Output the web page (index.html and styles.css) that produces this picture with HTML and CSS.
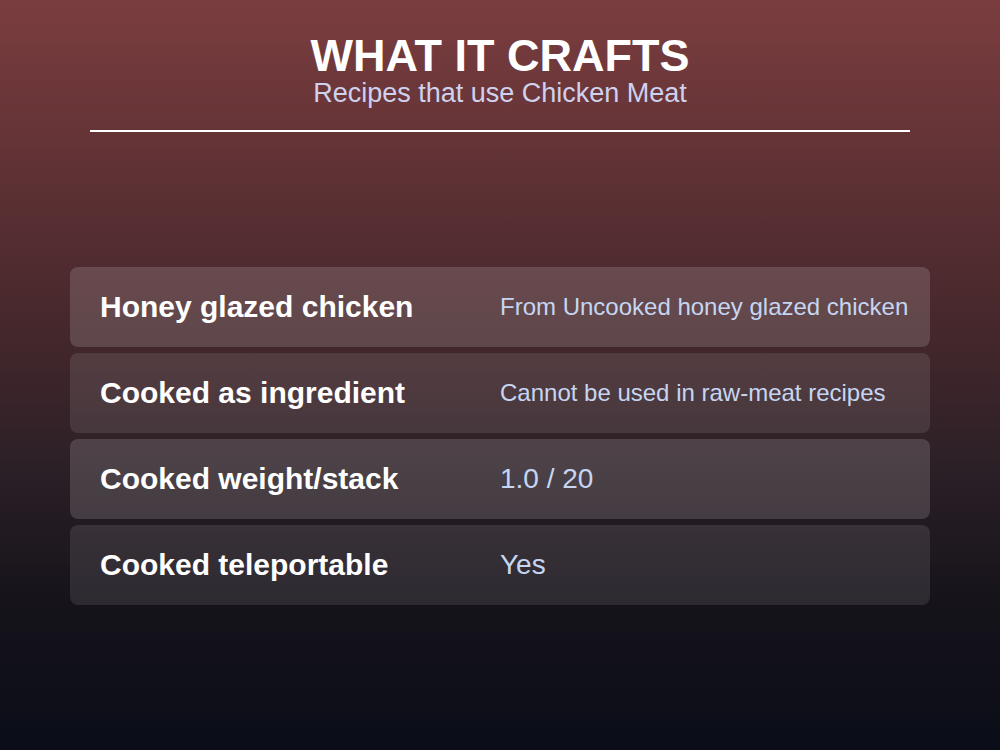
FILE: index.html
```html
<!DOCTYPE html>
<html lang="en">
<head>
  <meta charset="UTF-8">
  <meta name="viewport" content="width=device-width, initial-scale=1.0">
  <title>What It Crafts</title>
  <link rel="stylesheet" href="styles.css">
</head>
<body>
  <div class="page">
    <!-- Header -->
    <div class="header">
      <h1 class="title">WHAT IT CRAFTS</h1>
      <div class="subtitle">Recipes that use Chicken Meat</div>
    </div>
    <div class="divider"></div>

    <!-- Recipe rows -->
    <div class="rows">
      <div class="row">
        <div class="label">Honey glazed chicken</div>
        <div class="value small">From Uncooked honey glazed chicken</div>
      </div>
      <div class="row">
        <div class="label">Cooked as ingredient</div>
        <div class="value small">Cannot be used in raw-meat recipes</div>
      </div>
      <div class="row">
        <div class="label">Cooked weight/stack</div>
        <div class="value">1.0 / 20</div>
      </div>
      <div class="row">
        <div class="label">Cooked teleportable</div>
        <div class="value">Yes</div>
      </div>
    </div>
  </div>
</body>
</html>
```

FILE: styles.css
```css
html, body {
    margin: 0;
    padding: 0;
}
body {
    font-family: "Liberation Sans", Arial, sans-serif;
    width: 1000px;
    height: 750px;
    overflow: hidden;
    background: linear-gradient(to bottom, #7b3d3f 0%, #4a292d 40%, #2c2027 62%, #16131a 80%, #0a0d18 100%);
}
.page {
    width: 1000px;
    height: 750px;
}
.header {
    padding-top: 34px;
    text-align: center;
}
.title {
    margin: 0;
    font-size: 45px;
    line-height: 44px;
    font-weight: bold;
    color: #ffffff;
}
.subtitle {
    margin-top: 2px;
    font-size: 27px;
    line-height: 26px;
    color: #cfd2ee;
}
.divider {
    width: 820px;
    height: 2px;
    margin: 24px auto 0;
    background: #ffffff;
}
.rows {
    width: 860px;
    margin: 135px auto 0;
    display: flex;
    flex-direction: column;
    gap: 6px;
}
.row {
    height: 80px;
    padding: 0 10px 0 30px;
    display: grid;
    grid-template-columns: 400px 1fr;
    align-items: center;
    border-radius: 8px;
    background: rgba(255, 255, 255, 0.1);
}
.row:nth-child(odd) {
    background: rgba(255, 255, 255, 0.15);
}
.label {
    font-size: 30px;
    font-weight: bold;
    color: #ffffff;
    white-space: nowrap;
}
.value {
    font-size: 28px;
    color: #c6d6f2;
    white-space: nowrap;
}
.value.small {
    font-size: 24px;
}
```
